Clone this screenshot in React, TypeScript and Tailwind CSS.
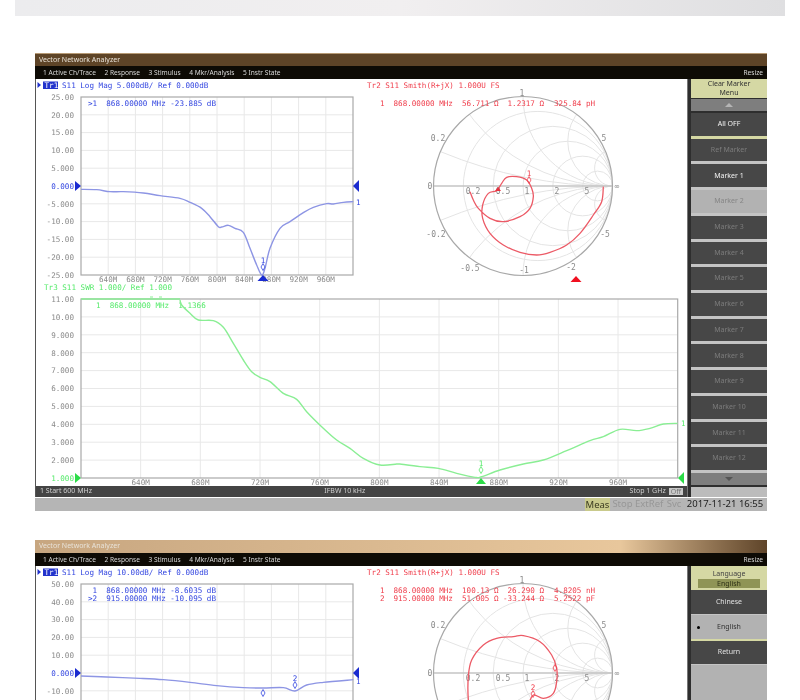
const BLUE = "#3346e0";
const BLUE_TRACE = "#8d95e4";
const GREEN = "#55ea6a";
const GREEN_TRACE = "#8aee94";
const RED = "#f0404e";
const GRID = "#e8e8e8";
const FRAME = "#a9a9a9";
const LABEL = "#8a8a8a";

// trace points are read off 3x crops of the picture, so scale them back here,
// then run a catmull-rom through them so the curves don't look faceted
const smooth = (list: number[][], ox: number, oy: number) => {
  const p = list.map(([x, y]) => [x / 3 + ox, y / 3 + oy]);
  let d = `M${p[0][0]} ${p[0][1]}`;
  for (let i = 0; i < p.length - 1; i++) {
    const a = p[Math.max(i - 1, 0)];
    const b = p[i];
    const c = p[i + 1];
    const e = p[Math.min(i + 2, p.length - 1)];
    d += ` C${b[0] + (c[0] - a[0]) / 6} ${b[1] + (c[1] - a[1]) / 6} ${c[0] - (e[0] - b[0]) / 6} ${c[1] - (e[1] - b[1]) / 6} ${c[0]} ${c[1]}`;
  }
  return d;
};

const LOG_TRACE_1 = [
  [153, 433], [200, 434], [240, 440], [280, 440], [340, 444], [390, 452], [450, 460], [480, 472],
  [515, 490], [540, 515], [565, 545], [575, 546], [595, 541], [615, 550], [640, 562], [660, 610],
  [680, 660], [695, 690], [705, 670], [720, 610], [750, 550], [780, 530], [820, 503], [850, 487],
  [890, 476], [910, 477], [940, 472], [970, 470],
];
const LOG_TRACE_2 = [
  [153, 423], [230, 426], [330, 430], [400, 434], [480, 442], [560, 452], [640, 458], [700, 459],
  [760, 458], [795, 468], [830, 450], [880, 442], [970, 434],
];
const SMITH_TRACE_1 = [
  [730, 425], [725, 470], [700, 510], [660, 565], [620, 600], [570, 622], [530, 630], [480, 622],
  [430, 600], [390, 565], [368, 520], [368, 480], [385, 445], [410, 437], [425, 415], [440, 397],
  [470, 395], [500, 405], [515, 430], [520, 455], [510, 490], [480, 515], [430, 530], [390, 520],
  [355, 490], [340, 465], [330, 440],
];
const SMITH_TRACE_2 = [
  [215, 560], [205, 495], [205, 425], [215, 375], [250, 330], [290, 310], [340, 305], [370, 302],
  [420, 320], [455, 360], [470, 400], [470, 440], [460, 475], [430, 490], [400, 480], [385, 510],
];
const SWR_LEFT = [
  [450, 60], [455, 75], [480, 100], [505, 120], [550, 122], [580, 142], [610, 190],
  [640, 240], [665, 275], [690, 292], [720, 305], [760, 340], [800, 358], [830, 395], [875, 440],
  [920, 480], [960, 505], [1000, 535], [1050, 555], [1100, 552], [1110, 552],
];
const SWR_RIGHT = [
  [0, 552], [60, 560], [115, 565], [170, 580], [225, 592], [245, 590], [300, 570], [370, 552],
  [430, 540], [500, 512], [570, 482], [610, 470], [660, 448], [710, 452], [750, 445], [790, 432],
  [833, 430],
];

function Plot({ x0, y0, dx, dy, cols, rows }: { x0: number; y0: number; dx: number; dy: number; cols: number; rows: number }) {
  return (
    <>
      {Array.from({ length: cols - 1 }, (_, i) => (
        <line key={i} x1={x0 + (i + 1) * dx} x2={x0 + (i + 1) * dx} y1={y0} y2={y0 + rows * dy} stroke={GRID} />
      ))}
      {Array.from({ length: rows - 1 }, (_, i) => (
        <line key={i} x1={x0} x2={x0 + cols * dx} y1={y0 + (i + 1) * dy} y2={y0 + (i + 1) * dy} stroke={GRID} />
      ))}
      <rect x={x0} y={y0} width={cols * dx} height={rows * dy} fill="none" stroke={FRAME} strokeWidth={1.2} />
    </>
  );
}

function Label({ x, y, fill = LABEL, anchor, children }: { x: number; y: number; fill?: string; anchor?: "end" | "middle"; children: React.ReactNode }) {
  return (
    <text x={x} y={y + 2.8} fill={fill} textAnchor={anchor} xmlSpace="preserve">
      {children}
    </text>
  );
}

function Marker({ x, y, n, fill }: { x: number; y: number; n?: string; fill: string }) {
  return (
    <>
      <polygon points={`${x},${y - 3.5} ${x + 2},${y} ${x},${y + 3.5} ${x - 2},${y}`} fill="none" stroke={fill} strokeWidth={0.8} />
      {n && <Label x={x} y={y - 7} fill={fill} anchor="middle">{n}</Label>}
    </>
  );
}

function LogMag({ scale, readout, labels, trace, cut, children }: { scale: string; readout: string[]; labels: string[]; trace: string; cut?: boolean; children?: React.ReactNode }) {
  return (
    <svg viewBox="36 79 320 204" className="w-[320px] h-[204px] shrink-0 overflow-visible text-[7.6px]">
      <polygon points="37.5,82 37.5,88 41,85" fill="#2233cc" />
      <rect x={43} y={81.5} width={15} height={7.5} fill="#2233cc" />
      <Label x={44.5} y={85} fill="#fff">Tr1</Label>
      <Label x={62} y={85} fill={BLUE}>{scale}</Label>
      {labels.map((l, i) => (
        <Label key={i} x={74} y={97 + i * 17.8} anchor="end" fill={l === "0.000" ? BLUE : LABEL}>{l}</Label>
      ))}
      <Plot x0={81} y0={97} dx={27.2} dy={17.8} cols={10} rows={10} />
      {readout.map((r, i) => (
        <Label key={i} x={88} y={103 + i * 8} fill={BLUE}>{r}</Label>
      ))}
      {!cut &&
        ["640M", "680M", "720M", "760M", "800M", "840M", "880M", "920M", "960M"].map((l, i) => (
          <Label key={l} x={108.2 + i * 27.2} y={279} anchor="middle">{l}</Label>
        ))}
      <polygon points="75,181 81,186 75,191" fill="#1a2bd0" />
      <polygon points="359,180 353,186 359,192" fill="#1a2bd0" />
      <path d={trace} fill="none" stroke={BLUE_TRACE} strokeWidth={1.4} />
      {children}
    </svg>
  );
}

function Smith({ id, title, readout, trace, cut, children }: { id: string; title: string; readout: string[][]; trace: string; cut?: boolean; children?: React.ReactNode }) {
  const cx = 523;
  const cy = 186;
  const R = 89.5;
  const steps = [0.2, 0.5, 1, 2, 5];
  return (
    <svg viewBox="356 79 331 204" className="w-[331px] h-[204px] shrink-0 text-[7.6px]">
      <clipPath id={id}>
        <circle cx={cx} cy={cy} r={R} />
      </clipPath>
      <g clipPath={`url(#${id})`} fill="none" stroke="#e4e4e4">
        {steps.map((r) => (
          <circle key={r} cx={cx + (R * r) / (1 + r)} cy={cy} r={R / (1 + r)} />
        ))}
        {steps.map((x) => (
          <g key={x}>
            <circle cx={cx + R} cy={cy - R / x} r={R / x} />
            <circle cx={cx + R} cy={cy + R / x} r={R / x} />
          </g>
        ))}
      </g>
      <line x1={433} x2={612} y1={cy} y2={cy} stroke="#c4c4c4" strokeWidth={1.5} />
      <circle cx={cx} cy={cy} r={R} fill="none" stroke="#a8a8a8" strokeWidth={1.2} />
      <g className="text-[8px]">
        <Label x={430} y={186} anchor="middle">0</Label>
        <Label x={473} y={191} anchor="middle">0.2</Label>
        <Label x={503} y={191} anchor="middle">0.5</Label>
        <Label x={527} y={191} anchor="middle">1</Label>
        <Label x={557} y={191} anchor="middle">2</Label>
        <Label x={587} y={191} anchor="middle">5</Label>
        <Label x={617} y={186} anchor="middle">∞</Label>
        <Label x={522} y={93} anchor="middle">1</Label>
        <Label x={438} y={138} anchor="middle">0.2</Label>
        <Label x={604} y={138} anchor="middle">5</Label>
        {!cut && (
          <>
            <Label x={436} y={234} anchor="middle">-0.2</Label>
            <Label x={605} y={234} anchor="middle">-5</Label>
            <Label x={470} y={268} anchor="middle">-0.5</Label>
            <Label x={524} y={270} anchor="middle">-1</Label>
            <Label x={571} y={267} anchor="middle">-2</Label>
          </>
        )}
      </g>
      <Label x={367} y={85} fill={RED}>{title}</Label>
      {readout.map((r, i) => (
        <g key={i}>
          <Label x={380} y={103 + i * 8} fill={RED}>{r[0]}</Label>
          <Label x={393.5} y={103 + i * 8} fill={RED}>{r[1]}</Label>
          <Label x={462} y={103 + i * 8} fill={RED}>{r[2]}</Label>
          <Label x={Number(r[5])} y={103 + i * 8} fill={RED}>{r[3]}</Label>
          <Label x={554} y={103 + i * 8} fill={RED}>{r[4]}</Label>
        </g>
      ))}
      <path d={trace} fill="none" stroke="#ec5a66" strokeWidth={1.3} />
      {children}
    </svg>
  );
}

function SwrChart() {
  const labels = ["11.00", "10.00", "9.000", "8.000", "7.000", "6.000", "5.000", "4.000", "3.000", "2.000", "1.000"];
  return (
    <svg viewBox="36 283 651 203" className="w-[651px] h-[203px] text-[7.6px]">
      <Label x={44} y={287} fill={GREEN}>Tr3 S11 SWR 1.000/ Ref 1.000</Label>
      {labels.map((l, i) => (
        <Label key={l} x={74} y={299 + i * 17.9} anchor="end" fill={l === "1.000" ? GREEN : LABEL}>{l}</Label>
      ))}
      <Plot x0={81} y0={299} dx={59.67} dy={17.9} cols={10} rows={10} />
      <Label x={96} y={305.5} fill={GREEN}>1  868.00000 MHz  1.1366</Label>
      {["640M", "680M", "720M", "760M", "800M", "840M", "880M", "920M", "960M"].map((l, i) => (
        <Label key={l} x={140.7 + i * 59.67} y={482} anchor="middle">{l}</Label>
      ))}
      <line x1={81} x2={180} y1={299} y2={299} stroke={GREEN_TRACE} strokeWidth={1.4} />
      <line x1={150} x2={153} y1={297} y2={297} stroke={GREEN_TRACE} />
      <line x1={159} x2={162} y1={297} y2={297} stroke={GREEN_TRACE} />
      <path d={smooth(SWR_LEFT, 30, 280)} fill="none" stroke={GREEN_TRACE} strokeWidth={1.4} />
      <path d={smooth(SWR_RIGHT, 400, 280)} fill="none" stroke={GREEN_TRACE} strokeWidth={1.4} />
      <polygon points="75,473 81,478 75,483" fill="#2bdc47" />
      <polygon points="684,472 678,478 684,484" fill="#2bdc47" />
      <polygon points="481,478 486,484 476,484" fill="#2bdc47" />
      <Marker x={481} y={470} n="1" fill={GREEN} />
      <Label x={681} y={423} fill={GREEN}>1</Label>
    </svg>
  );
}

function Key({ label, tone = "off", edge = "border-[#c4c4c4]" }: { label: string; tone?: "on" | "off" | "lit"; edge?: string }) {
  const colors = {
    on: "bg-[#474747] text-[#f2f2f2]",
    off: "bg-[#474747] text-[#7c7c7c]",
    lit: "bg-[#b2b2b2] text-[#858585]",
  }[tone];
  return <div className={`flex-1 flex items-center justify-center border-b-[3px] ${edge} ${colors}`}>{label}</div>;
}

function MarkerKeys() {
  const markers = Array.from({ length: 12 }, (_, i) => `Marker ${i + 1}`);
  return (
    <>
      <div className="h-[19px] mb-px bg-[#d5d8a4] text-[#333] leading-[8.5px] flex items-center justify-center text-center">
        Clear Marker
        <br />
        Menu
      </div>
      <div className="h-3 mb-0.5 bg-[#7e7e7e] flex items-center justify-center">
        <div className="w-0 h-0 border-x-[4px] border-x-transparent border-b-[4px] border-b-[#b5b5b5]" />
      </div>
      <div className="h-[360px] flex flex-col">
        <Key label="All OFF" tone="on" edge="border-[#d5d8a4]" />
        <Key label="Ref Marker" />
        {markers.map((m, i) => (
          <Key key={m} label={m} tone={i === 0 ? "on" : i === 1 ? "lit" : "off"} />
        ))}
      </div>
      <div className="h-3 mb-0.5 bg-[#7e7e7e] flex items-center justify-center">
        <div className="w-0 h-0 border-x-[4px] border-x-transparent border-t-[4px] border-t-[#555]" />
      </div>
      <div className="h-2.5 bg-[#bcbcbc]" />
    </>
  );
}

function LanguageKeys() {
  return (
    <>
      <div className="h-[24px] bg-[#d5d8a4] text-[#444] flex flex-col items-center justify-center">
        <span className="leading-[10px]">Language</span>
        <span className="w-[62px] h-[9px] leading-[9px] text-center bg-[#8f9456] text-[#2f3216]">English</span>
      </div>
      <div className="h-[25px] bg-[#474747] text-[#e0e0e0] flex items-center justify-center border-b border-[#c4c4c4]">Chinese</div>
      <div className="relative h-[26px] bg-[#b2b2b2] text-[#333] flex items-center justify-center border-b-2 border-[#d5d8a4]">
        <span className="absolute left-[6px] w-[3px] h-[3px] rounded-full bg-black" />
        English
      </div>
      <div className="h-[24px] bg-[#474747] text-[#e0e0e0] flex items-center justify-center border-b border-[#c4c4c4]">Return</div>
      <div className="flex-1 bg-[#b2b2b2]" />
    </>
  );
}

// the second window runs off the bottom of the page, so it only has its top part
function Window({ titleBar, keys, cropped, children }: { titleBar: string; keys: React.ReactNode; cropped?: boolean; children: React.ReactNode }) {
  const menu = ["1 Active Ch/Trace", "2 Response", "3 Stimulus", "4 Mkr/Analysis", "5 Instr State"];
  return (
    <div className={`mx-[35px] w-[732px] flex flex-col text-[7px] font-['Noto_Sans',sans-serif] ${cropped ? "h-[160px] overflow-hidden" : "h-[458px]"}`}>
      <div className={`h-[13px] shrink-0 px-1 flex items-center text-[#e8e2d8] ${titleBar}`}>Vector Network Analyzer</div>
      <div className="h-[13px] shrink-0 pl-2 pr-1 flex items-center gap-[8.5px] bg-[#0e0b05] text-[#d8d8d8] text-[6.6px]">
        {menu.map((m) => (
          <span key={m}>{m}</span>
        ))}
        <span className="ml-auto">Resize</span>
      </div>
      <div className={`flex bg-[#b5b5b5] ${cropped ? "h-[134px]" : "h-[418px]"}`}>
        <div className="w-[652px] flex flex-col border-l border-[#555] bg-white">
          <div className="flex-1 min-h-0 font-['DejaVu_Sans_Mono',monospace]">{children}</div>
          {!cropped && (
            <div className="h-[11px] px-1 flex items-center justify-between bg-[#444] text-[#d0d0d0]">
              <span>1 Start 600 MHz</span>
              <span className="-ml-8">IFBW 10 kHz</span>
              <span className="flex items-center gap-[3px]">
                Stop 1 GHz
                <span className="px-0.5 leading-[7px] bg-[#c8c8c8] text-[#777]">Off</span>
              </span>
            </div>
          )}
        </div>
        <div className="w-[80px] pl-[3px] flex flex-col border-l border-[#777] bg-[#2e2e2e]">{keys}</div>
      </div>
      {!cropped && (
        <div className="h-[13px] mt-px flex items-center justify-end gap-px pr-[2px] bg-[#b5b5b5] text-[9.5px] whitespace-nowrap">
          <span className="w-[25px] text-center leading-[13px] bg-[#c9ca8c] text-[#3a3a20]">Meas</span>
          <span className="w-[23px] text-center text-[#979797]">Stop</span>
          <span className="w-[28px] text-center text-[#979797]">ExtRef</span>
          <span className="w-[20px] text-center text-[#979797]">Svc</span>
          <span className="w-[80px] text-center text-[#222]">2017-11-21 16:55</span>
        </div>
      )}
    </div>
  );
}

export default function App() {
  const labels1 = ["25.00", "20.00", "15.00", "10.00", "5.000", "0.000", "-5.000", "-10.00", "-15.00", "-20.00", "-25.00"];
  const labels2 = ["50.00", "40.00", "30.00", "20.00", "10.00", "0.000", "-10.00"];
  return (
    <div className="h-[700px] w-[800px] overflow-hidden bg-white blur-[0.5px]">
      <div className="mx-[15px] h-4 bg-gradient-to-r from-[#ececee] via-[#f1eff0] to-[#dfdfe1]" />
      <div className="mt-[37px]">
        <Window titleBar="bg-[#5e4427] border-t border-[#b79a75]" keys={<MarkerKeys />}>
          <div className="flex">
            <LogMag
              scale="S11 Log Mag 5.000dB/ Ref 0.000dB"
              readout={[">1  868.00000 MHz -23.885 dB"]}
              labels={labels1}
              trace={smooth(LOG_TRACE_1, 30, 45)}
            >
              <polygon points="263,275 268.5,281 257.5,281" fill="#1a2bd0" />
              <Marker x={263} y={267} n="1" fill={BLUE} />
              <Label x={356} y={202} fill={BLUE}>1</Label>
            </LogMag>
            <Smith
              id="smith-a"
              title="Tr2 S11 Smith(R+jX) 1.000U FS"
              readout={[["1", "868.00000 MHz", "56.711 Ω", "1.2317 Ω", "325.84 pH", "507.5"]]}
              trace={smooth(SMITH_TRACE_1, 360, 45)}
            >
              <Marker x={529} y={180} n="1" fill={RED} />
              <polygon points="498,187 501,191 495,191" fill="#e8303e" />
              <polygon points="576,276 581.5,282 570.5,282" fill="#f01020" />
            </Smith>
          </div>
          <SwrChart />
        </Window>
      </div>
      <div className="mt-[29px]">
        <Window
          cropped
          titleBar="bg-gradient-to-r from-[#c7a680] via-[#e8c79c] via-80% to-[#5f452a] text-[#6f6a60]"
          keys={<LanguageKeys />}
        >
          <div className="flex">
            <LogMag
              cut
              scale="S11 Log Mag 10.00dB/ Ref 0.000dB"
              readout={[" 1  868.00000 MHz -8.6035 dB", ">2  915.00000 MHz -10.095 dB"]}
              labels={labels2}
              trace={smooth(LOG_TRACE_2, 30, 48)}
            >
              <Marker x={263} y={206} fill={BLUE} />
              <Marker x={295} y={198} n="2" fill={BLUE} />
              <Label x={356} y={194} fill={BLUE}>1</Label>
            </LogMag>
            <Smith
              cut
              id="smith-b"
              title="Tr2 S11 Smith(R+jX) 1.000U FS"
              readout={[
                ["1", "868.00000 MHz", "100.13 Ω", "26.290 Ω", "4.8205 nH", "507.5"],
                ["2", "915.00000 MHz", "51.005 Ω", "-33.244 Ω", "5.2522 pF", "503"],
              ]}
              trace={smooth(SMITH_TRACE_2, 400, 48)}
            >
              <Marker x={533} y={207} n="2" fill={RED} />
              <Marker x={555} y={181} fill={RED} />
            </Smith>
          </div>
        </Window>
      </div>
    </div>
  );
}
